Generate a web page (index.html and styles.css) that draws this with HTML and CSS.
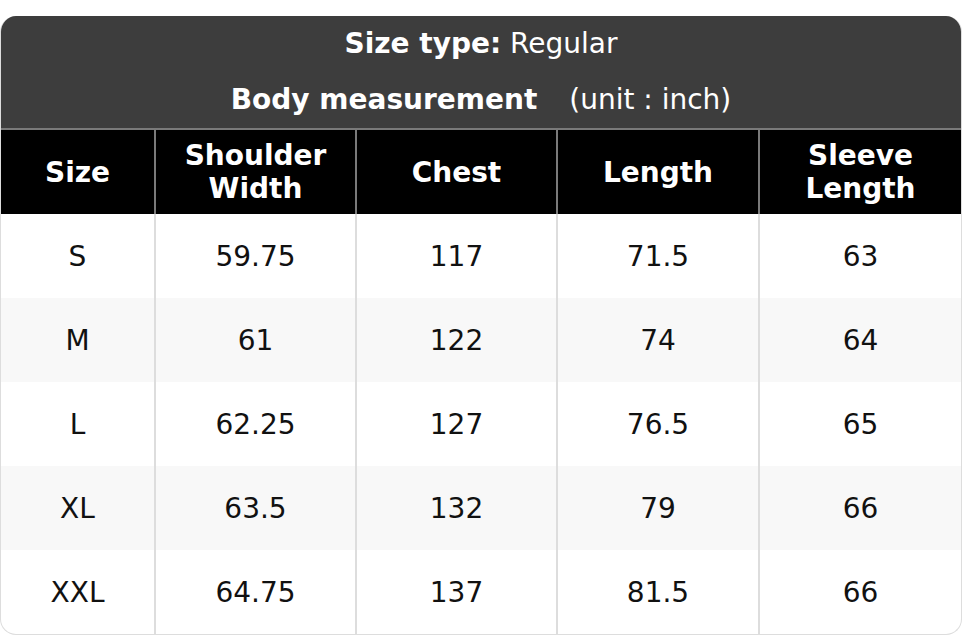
FILE: index.html
```html
<!DOCTYPE html>
<html>
<head>
<meta charset="utf-8">
<link rel="stylesheet" href="styles.css">
</head>
<body>
<div class="chart">
  <div class="banner">
    <div class="line1"><b>Size type:</b> Regular</div>
    <div class="line2"><b>Body measurement</b><span class="unit">(unit : inch)</span></div>
  </div>
  <table class="grid">
    <colgroup>
      <col class="c1"><col class="c2"><col class="c3"><col class="c4"><col class="c5">
    </colgroup>
    <thead>
      <tr><th>Size</th><th>Shoulder<br>Width</th><th>Chest</th><th>Length</th><th>Sleeve<br>Length</th></tr>
    </thead>
    <tbody>
      <tr><td>S</td><td>59.75</td><td>117</td><td>71.5</td><td>63</td></tr>
      <tr><td>M</td><td>61</td><td>122</td><td>74</td><td>64</td></tr>
      <tr><td>L</td><td>62.25</td><td>127</td><td>76.5</td><td>65</td></tr>
      <tr><td>XL</td><td>63.5</td><td>132</td><td>79</td><td>66</td></tr>
      <tr><td>XXL</td><td>64.75</td><td>137</td><td>81.5</td><td>66</td></tr>
    </tbody>
  </table>
</div>
</body>
</html>
```
FILE: styles.css
```css
html, body {
  margin: 0;
  padding: 0;
  background: #ffffff;
}
body {
  padding-top: 16px;
  font-family: "DejaVu Sans", sans-serif;
}
.chart {
  width: 962px;
  box-sizing: border-box;
  border: 1px solid #dddddd;
  border-top: none;
  border-radius: 16px;
  overflow: hidden;
}
.banner {
  background: #3d3d3d;
  color: #ffffff;
  text-align: center;
  font-size: 28px;
  height: 114px;
  box-sizing: border-box;
  padding-top: 9px;
  border-bottom: 2px solid #7a7a7a;
}
.line1 {
  height: 56px;
  line-height: 38px;
}
.line2 {
  line-height: 38px;
}
.unit {
  margin-left: 32px;
}
.grid {
  width: 100%;
  border-collapse: collapse;
  table-layout: fixed;
  font-size: 28px;
}
.c1 { width: 154px; }
.c2 { width: 201px; }
.c3 { width: 201px; }
.c4 { width: 202px; }
.c5 { width: auto; }
.grid th {
  background: #000000;
  color: #ffffff;
  font-weight: bold;
  height: 84px;
  line-height: 33px;
  padding: 0;
  border-left: 2px solid #7a7a7a;
}
.grid td {
  height: 84px;
  padding: 0;
  text-align: center;
  color: #111111;
  border-left: 2px solid #dddddd;
}
.grid th:first-child, .grid td:first-child {
  border-left: none;
}
.grid tbody tr:nth-child(even) td {
  background: #f8f8f8;
}
```
